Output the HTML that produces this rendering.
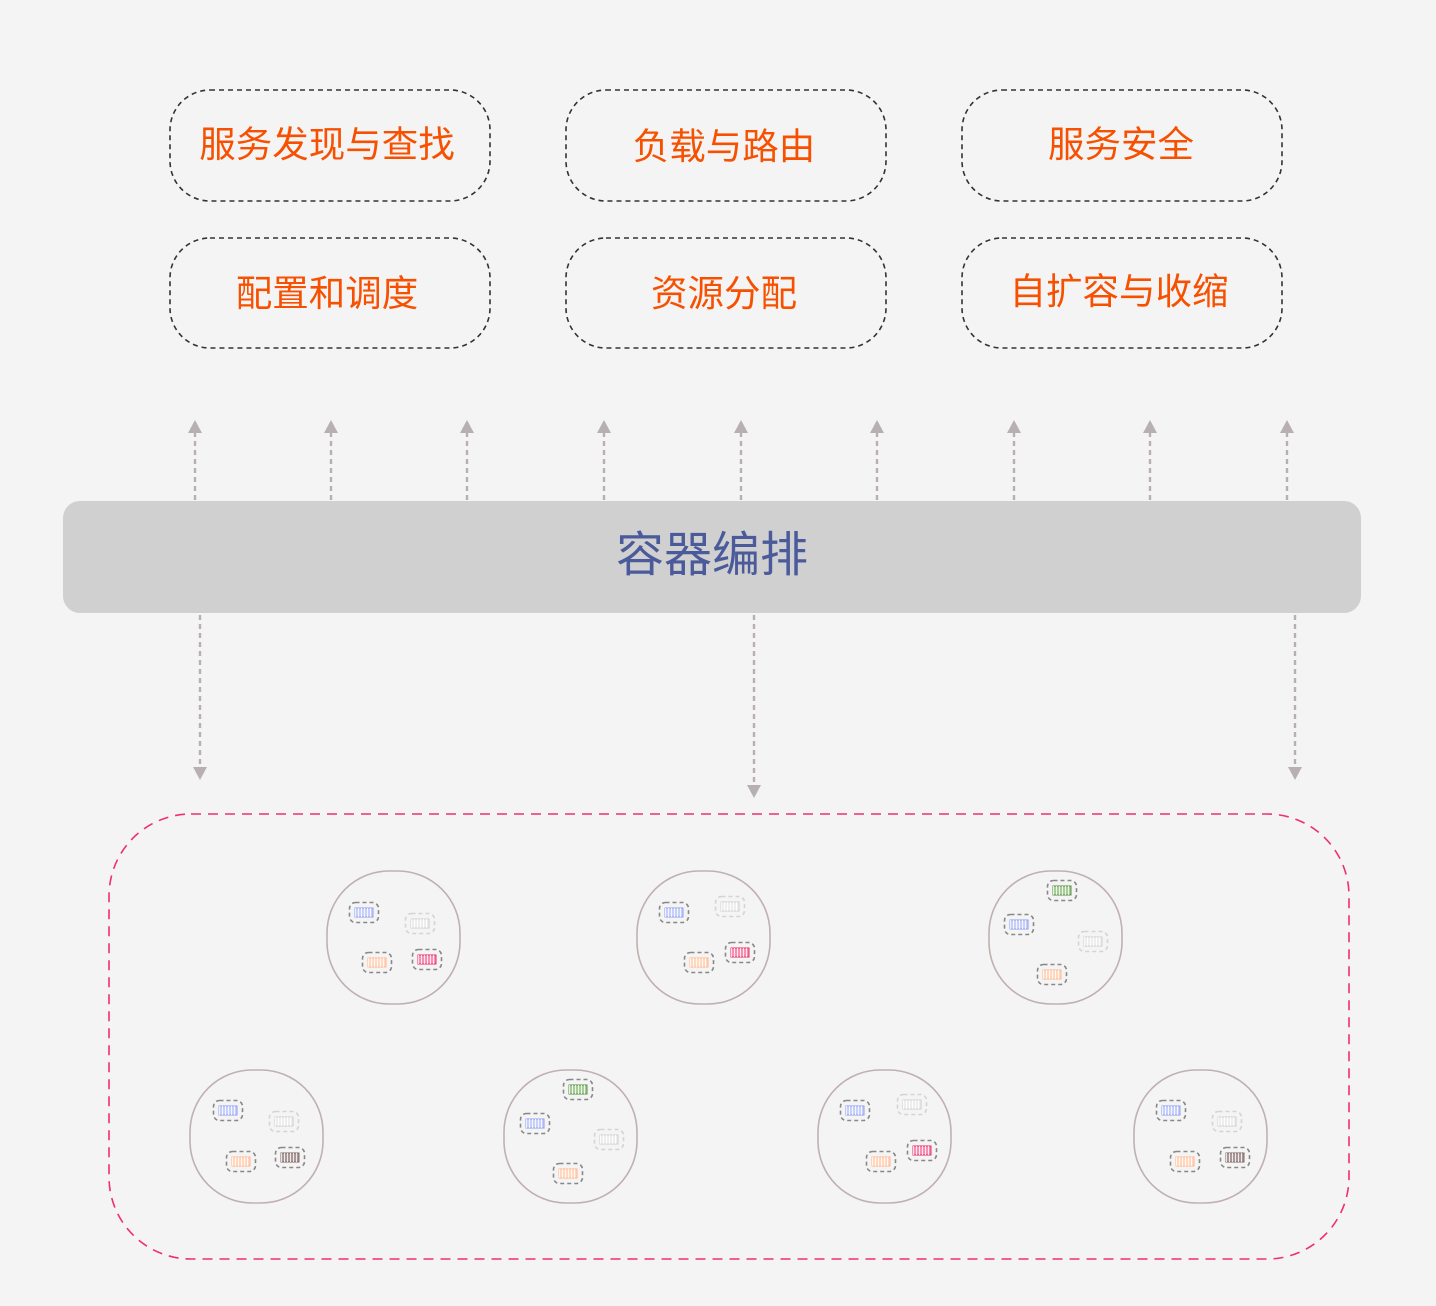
<!DOCTYPE html>
<html><head><meta charset="utf-8"><style>
html,body{margin:0;padding:0;background:#f4f4f4}
svg{display:block}
text{font-family:"Liberation Sans","Noto Sans CJK SC",sans-serif}
</style></head><body>
<svg width="1436" height="1306" viewBox="0 0 1436 1306" xmlns="http://www.w3.org/2000/svg">
<defs>
<pattern id="st" width="3" height="10" patternUnits="userSpaceOnUse"><rect x="0" y="0" width="1" height="10" fill="#fff" opacity="0.8"/></pattern>
<g id="cp"><rect x="0.5" y="0.5" width="29" height="20" rx="6" fill="none" stroke="#888" stroke-width="1.6" stroke-dasharray="4 3"/><rect x="6" y="6" width="18" height="9" fill="#c8d0fa" stroke="#8fa0f0"/><rect x="6" y="6" width="18" height="9" fill="url(#st)"/></g>
<g id="cg"><rect x="0.5" y="0.5" width="29" height="20" rx="6" fill="none" stroke="#d4d4d4" stroke-width="1.6" stroke-dasharray="4 3"/><rect x="6" y="6" width="18" height="9" fill="#eee" stroke="#d0d0d0"/><rect x="6" y="6" width="18" height="9" fill="url(#st)"/></g>
<g id="co"><rect x="0.5" y="0.5" width="29" height="20" rx="6" fill="none" stroke="#888" stroke-width="1.6" stroke-dasharray="4 3"/><rect x="6" y="6" width="18" height="9" fill="#ffd8c0" stroke="#ffb890"/><rect x="6" y="6" width="18" height="9" fill="url(#st)"/></g>
<g id="ck"><rect x="0.5" y="0.5" width="29" height="20" rx="6" fill="none" stroke="#888" stroke-width="1.6" stroke-dasharray="4 3"/><rect x="6" y="6" width="18" height="9" fill="#f78fb0" stroke="#e0306a"/><rect x="6" y="6" width="18" height="9" fill="url(#st)"/></g>
<g id="cn"><rect x="0.5" y="0.5" width="29" height="20" rx="6" fill="none" stroke="#888" stroke-width="1.6" stroke-dasharray="4 3"/><rect x="6" y="6" width="18" height="9" fill="#a8cc98" stroke="#5a9048"/><rect x="6" y="6" width="18" height="9" fill="url(#st)"/></g>
<g id="cd"><rect x="0.5" y="0.5" width="29" height="20" rx="6" fill="none" stroke="#888" stroke-width="1.6" stroke-dasharray="4 3"/><rect x="6" y="6" width="18" height="9" fill="#a89898" stroke="#806868"/><rect x="6" y="6" width="18" height="9" fill="url(#st)"/></g>
<g id="au"><line x1="0" y1="12" x2="0" y2="80" stroke="#b8b0b0" stroke-width="2.4" stroke-dasharray="5 4"/><path d="M-7 13 L0 0 L7 13 Z" fill="#b8b0b0"/></g>
</defs>
<g fill="none" stroke="#333" stroke-width="1.6" stroke-dasharray="5 4">
<rect x="170" y="90" width="320" height="111" rx="40"/>
<rect x="566" y="90" width="320" height="111" rx="40"/>
<rect x="962" y="90" width="320" height="111" rx="40"/>
<rect x="170" y="238" width="320" height="110" rx="40"/>
<rect x="566" y="238" width="320" height="110" rx="40"/>
<rect x="962" y="238" width="320" height="110" rx="40"/>
</g>
<g fill="#f75000" font-size="36.5" text-anchor="middle">
<text x="327" y="157">服务发现与查找</text>
<text x="724" y="159">负载与路由</text>
<text x="1121" y="157">服务安全</text>
<text x="327" y="306">配置和调度</text>
<text x="724" y="306">资源分配</text>
<text x="1119" y="304">自扩容与收缩</text>
</g>
<use href="#au" x="195" y="420"/><use href="#au" x="331" y="420"/><use href="#au" x="467" y="420"/>
<use href="#au" x="604" y="420"/><use href="#au" x="741" y="420"/><use href="#au" x="877" y="420"/>
<use href="#au" x="1014" y="420"/><use href="#au" x="1150" y="420"/><use href="#au" x="1287" y="420"/>
<rect x="63" y="501" width="1298" height="112" rx="17" fill="#d0d0d0"/>
<text x="712" y="571" font-size="48" fill="#4a5a9a" text-anchor="middle">容器编排</text>
<g stroke="#b8b0b0" stroke-width="2.4" stroke-dasharray="5 4">
<line x1="200" y1="615" x2="200" y2="768"/><line x1="754" y1="615" x2="754" y2="786"/><line x1="1295" y1="615" x2="1295" y2="768"/>
</g>
<g fill="#b8b0b0"><path d="M193 767 L200 780 L207 767Z"/><path d="M747 785 L754 798 L761 785Z"/><path d="M1288 767 L1295 780 L1302 767Z"/></g>
<rect x="109" y="814" width="1240" height="445" rx="82" fill="none" stroke="#f0306a" stroke-width="1.6" stroke-dasharray="10 7"/>
<g fill="none" stroke="#c0b0b0" stroke-width="1.6">
<rect x="327" y="871" width="133" height="133" rx="62"/>
<rect x="637" y="871" width="133" height="133" rx="62"/>
<rect x="989" y="871" width="133" height="133" rx="62"/>
<rect x="190" y="1070" width="133" height="133" rx="62"/>
<rect x="504" y="1070" width="133" height="133" rx="62"/>
<rect x="818" y="1070" width="133" height="133" rx="62"/>
<rect x="1134" y="1070" width="133" height="133" rx="62"/>
</g>
<use href="#cp" x="349" y="902"/><use href="#cg" x="405" y="913"/><use href="#co" x="362" y="952"/><use href="#ck" x="412" y="949"/>
<use href="#cp" x="659" y="902"/><use href="#cg" x="715" y="896"/><use href="#co" x="684" y="952"/><use href="#ck" x="725" y="942"/>
<use href="#cn" x="1047" y="880"/><use href="#cp" x="1004" y="914"/><use href="#cg" x="1078" y="931"/><use href="#co" x="1037" y="964"/>
<use href="#cp" x="213" y="1100"/><use href="#cg" x="269" y="1111"/><use href="#co" x="226" y="1151"/><use href="#cd" x="275" y="1147"/>
<use href="#cn" x="563" y="1079"/><use href="#cp" x="520" y="1113"/><use href="#cg" x="594" y="1129"/><use href="#co" x="553" y="1163"/>
<use href="#cp" x="840" y="1100"/><use href="#cg" x="897" y="1094"/><use href="#co" x="866" y="1151"/><use href="#ck" x="907" y="1140"/>
<use href="#cp" x="1156" y="1100"/><use href="#cg" x="1212" y="1111"/><use href="#co" x="1170" y="1151"/><use href="#cd" x="1220" y="1147"/>
</svg>
</body></html>
